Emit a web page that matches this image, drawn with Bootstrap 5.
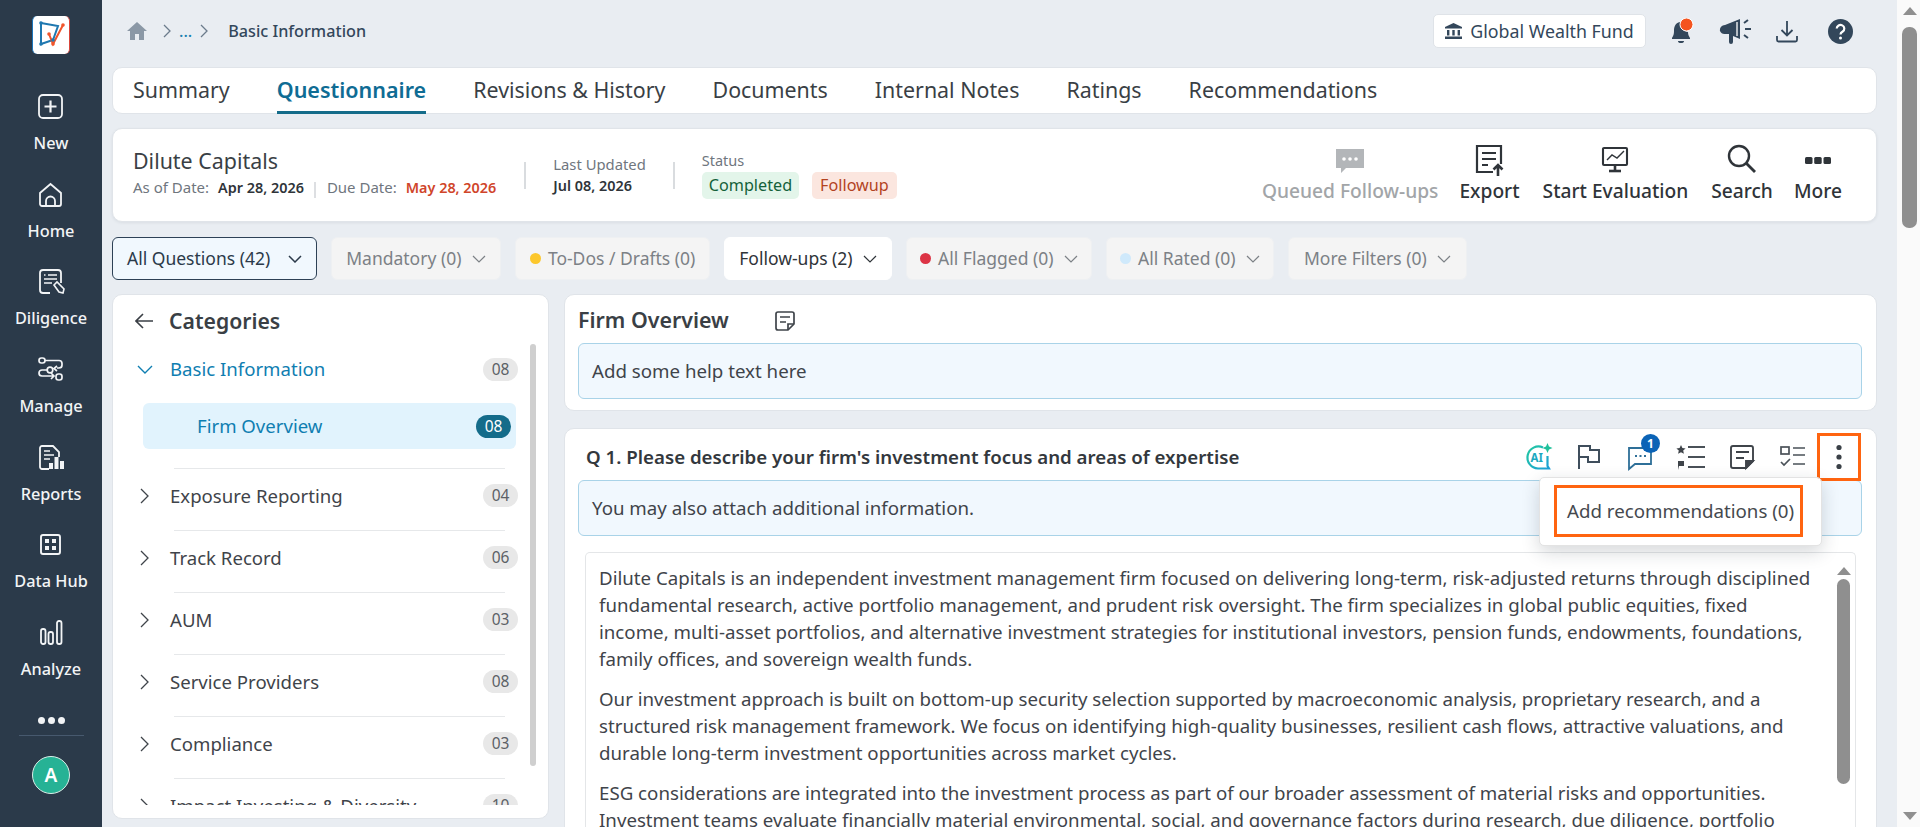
<!DOCTYPE html>
<html lang="en">
<head>
  <meta charset="UTF-8" />
  <meta name="viewport" content="width=device-width, initial-scale=1.0"/>
  <title>Questionnaire - Basic Information</title>
  <link href="https://cdn.jsdelivr.net/npm/bootstrap@5.3.2/dist/css/bootstrap.min.css" rel="stylesheet">
  <style>
    html, body { height: 827px; overflow: hidden; }
    body { font-family: "Noto Sans", "Open Sans", sans-serif; background: #e9edf2; color: #3a3f45; }

    /* left rail */
    .rail { width: 102px; height: 827px; background: #2b3a4a; color: #f2f4f6; padding-top: 16px; flex: none; }
    .rail-logo { width: 38px; height: 38px; background: #fff; border-radius: 5px; margin-bottom: 34px; border-right: 1px solid #d9453a; border-left: 1px solid #1b75bb; flex: none; }
    .rail-item { height: 87.7px; font-size: 16.3px; font-weight: 500; line-height: 22px; flex: none; }
    .rail-item svg { height: 38px; width: 30px; margin-bottom: 6px; }
    .rail-dots { font-size: 0; gap: 3px; margin-top: 15px; }
    .rail-dots i { width: 7px; height: 7px; border-radius: 50%; background: #f2f4f6; }
    .rail-line { width: 65px; border-top: 1px solid #47596e; margin: 11px 0 20px; }
    .rail-avatar { width: 38px; height: 38px; border-radius: 50%; background: #26b295; border: 1px solid #d9efe9; font-size: 19px; font-weight: 600; color: #fff; }

    /* page */
    .page-main { width: 1795px; padding: 0 20px 0 10px; flex: none; }
    .page-scroll { width: 23px; height: 827px; background: #fafafa; flex: none; padding: 7px 3px 7px 5px; }
    .scroll-up { width: 0; height: 0; border: 7px solid transparent; border-top: 0; border-bottom: 8px solid #8f8f8f; margin: 0 auto 3px; }
    .scroll-down { width: 0; height: 0; border: 7px solid transparent; border-bottom: 0; border-top: 8px solid #8f8f8f; margin: auto auto 0; }
    .page-thumb { height: 201px; background: #8f8f8f; border-radius: 7px; margin-top: 9px; }
    .top-bar { height: 67px; padding: 0 24px 5px 15px; }
    .crumb { font-size: 16.2px; font-weight: 500; color: #33475b; }
    .crumb-more { color: #1a7fb0; }
    .fund-chip { width: 213px; height: 34px; background: #fff; border: 1px solid #dfe3e8; border-radius: 5px; font-size: 17.8px; color: #33475b; margin-right: 23px; }
    .tool-mid { margin-left: 22px; }
    .tool-end { margin-left: 29px; }

    .panel { background: #fff; border: 1px solid #e0e4e9; border-radius: 10px; }
    .tabs-bar { height: 47px; padding: 0 20px; gap: 47px; margin-bottom: 14px; }
    .tabs-bar .nav-link { padding: 0; height: 46px; line-height: 43px; font-size: 21.4px; color: #3a3f45; border-bottom: 3px solid transparent; }
    .tabs-bar .nav-link.active { color: #0f6c94; font-weight: 600; font-size: 21.5px; border-bottom-color: #146c8a; }

    .head-card { height: 94px; padding: 0 34px 0 20px; margin-bottom: 15px; box-shadow: 0 1px 3px rgba(40,50,60,.08); }
    .firm-block { padding-bottom: 6px; margin-right: 1px; }
    .firm-name { font-size: 21.4px; line-height: 28px; color: #3a3f45; margin-bottom: 2px; }
    .head-small { font-size: 15px; line-height: 21px; color: #6f767e; white-space: nowrap; }
    .head-strong { font-size: 14.4px; font-weight: 600; color: #2f3439; margin-left: 9px; }
    .head-due { font-size: 14.4px; font-weight: 600; color: #d0452a; margin-left: 9px; }
    .date-split { width: 2px; height: 16px; background: #dddfe2; margin: 5px 11px 0 10px; }
    .head-sep { width: 2px; height: 27px; background: #d9dcdf; margin: 0 27px; }
    .updated-label { font-size: 14.8px; }
    .status-label { font-size: 14.5px; line-height: 16px; }
    .state-row { gap: 13px; }
    .state-chip { height: 27px; line-height: 27px; border-radius: 5px; padding: 0 7px; font-size: 16.2px; }
    .state-done { background: #e3f5ea; color: #14613a; }
    .state-follow { background: #fbe6df; color: #b3431f; padding: 0 8px; }
    .head-act { font-size: 19.2px; font-weight: 500; color: #2f3439; line-height: 24px; padding-bottom: 4px; white-space: nowrap; }
    .head-act svg { height: 34px; width: 36px; margin-bottom: 1px; }
    .head-act.off { color: #a2a5a8; }
    .act-gap { margin-left: 21px; }
    .act-wide { margin-left: 23px; }

    .filter-row { height: 43px; gap: 14px; margin-bottom: 14px; }
    .filter-btn { height: 43px; padding: 0 14px; font-size: 17.5px; line-height: 1; border-radius: 6px; border: 1px solid #eef0f2; background: #f4f4f4; color: #7c8186; gap: 7px; display: inline-flex; align-items: center; white-space: nowrap; }
    .filter-btn svg { margin-left: 3.5px; }
    .filter-btn.on { background: #f1f8fe; border-color: #2d4156; color: #2b3a4a; }
    .filter-btn.on svg { margin-left: 11px; }
    .filter-btn.plain { background: #fff; border-color: #fff; color: #2f3439; }
    .filter-btn.dotted { padding: 0 13px; }
    .filter-btn.wide { padding: 0 15px; }
    .dot-mark { width: 11px; height: 11px; border-radius: 50%; }

    .body-row { gap: 15px; height: 540px; }
    .cat-panel { width: 437px; height: 525px; padding: 0 12px 13px 0; flex: none; }
    .cat-title { font-size: 21.2px; font-weight: 600; line-height: 28px; padding: 3px 0 0 22px; gap: 16px; height: 49px; color: #3a3f45; }
    .cat-wrap { height: 461px; overflow: hidden; }
    .cat-scroll { width: 6px; height: 422px; background: #cfcfcf; border-radius: 3px; flex: none; }
    .cat-list { width: 406px; flex: none; display: block; }
    .cat-row { height: 61px; font-size: 18.6px; padding: 0 1px 8px 24px; gap: 17px; background: transparent; border: 0; color: #3f444a; }
    .cat-row svg { flex: none; }
    .cat-row .cat-count { margin-left: auto; }
    .cat-rule { height: 1px; background: #e6e8ea; margin-left: 61px; width: 331px; }
    .cat-open { height: 50px; color: #0f7eb1; padding-bottom: 0; }
    .cat-sub { height: 46px; width: 373px; margin: 9px 0 19px 30px; padding: 0 5px 0 54px; background: #e1f3fd; border-radius: 6px; color: #0f7eb1; font-size: 18.6px; }
    .cat-count { width: 35px; height: 23px; border-radius: 12px; background: #e8e8e8; color: #5c6166; font-size: 15.5px; font-weight: 400; padding: 0; line-height: 23px; flex: none; }
    .cat-sub .cat-count { background: #146c8a; color: #fff; }

    .right-col { width: 1313px; gap: 17px; flex: none; }
    .help-box { height: 56px; background: #f1f8fe; border: 1px solid #a9d3e8; border-radius: 6px; font-size: 18.7px; padding: 0 13px; color: #3f444a; flex: none; }
    .over-card { height: 117px; padding: 0 14px 0 13px; flex: none; }
    .over-title { height: 48px; font-size: 21.4px; font-weight: 600; padding-top: 3px; gap: 45px; color: #3a3f45; }
    .q-card { height: 420px; padding: 0 14px 0 13px; flex: none; }
    .q-head { height: 51px; padding: 5px 1px 0 8px; font-size: 18.7px; font-weight: 600; color: #33383d; }
    .q-tools { gap: 21px; }
    .q-tools svg { width: 30px; height: 30px; display: block; flex: none; }
    .q-kebab { width: 44px; height: 48px; border: 3px solid #ff6410; margin: 0 0 0 9px; flex: none; }
    .q-badge { top: -8px; right: -5px; width: 19px; height: 19px; background: #0b63b6; font-size: 12px; line-height: 19px; padding: 0; border-radius: 50%; }
    .q-menu { top: 44px; right: 39px; left: auto; width: 283px; height: 69px; padding: 7px 20px 0 14px; border-radius: 5px; box-shadow: 0 6px 18px rgba(30,40,50,.18); border-color: #e3e3e3; margin: 0; }
    .q-menu-hit { height: 52px; width: 249px; border: 3px solid #ff6410; font-size: 18.7px; font-weight: 400; color: #45494e; padding-left: 10px; white-space: nowrap; }
    .answer-box { margin: 16px 6px 0 7px; border: 1px solid #e4e6e8; border-bottom: 0; border-radius: 5px 5px 0 0; padding: 11px 0 0 13px; height: 300px; overflow: hidden; }
    .answer-text { width: 1215px; font-size: 18.7px; line-height: 27px; color: #3f444a; }
    .answer-text p { margin-bottom: 13px; }
    .answer-bar { width: 20px; padding: 3px 5px 0 2px; flex: none; }
    .answer-thumb { height: 205px; background: #8f8f8f; border-radius: 7px; margin-top: 4px; }
  </style>
</head>
<body class="d-flex">

  <!-- Left rail -->
  <nav class="rail d-flex flex-column align-items-center text-center">
    <div class="rail-logo d-flex align-items-center justify-content-center">
      <svg width="30" height="30" viewBox="0 0 30 30" fill="none" stroke-width="2">
        <path d="M5 3 L22 6 L17 20 L5 24 Z" stroke="#1f78b0"/>
        <path d="M13 14 L17 24 L27 5" stroke="#f0552b"/>
        <circle cx="5" cy="3" r="1.8" fill="#1f78b0" stroke="none"/><circle cx="5" cy="24" r="1.8" fill="#1f78b0" stroke="none"/><circle cx="17" cy="20" r="1.8" fill="#1f78b0" stroke="none"/>
        <circle cx="13" cy="14" r="1.8" fill="#f0552b" stroke="none"/><circle cx="27" cy="5" r="1.8" fill="#f0552b" stroke="none"/><circle cx="17" cy="24" r="1.8" fill="#f0552b" stroke="none"/>
      </svg>
    </div>
    <div class="rail-item">
      <svg viewBox="0 0 30 38" fill="none" stroke="#f2f4f6" stroke-width="1.8"><rect x="3" y="7" width="23" height="23" rx="4"/><path d="M14.5 12.5v12M8.5 18.5h12" stroke-width="2.2"/></svg>
      <div>New</div>
    </div>
    <div class="rail-item">
      <svg viewBox="0 0 30 38" fill="none" stroke="#f2f4f6" stroke-width="1.8"><path d="M4 17 L14.5 8 L25 17 V28 a2 2 0 0 1-2 2 H6 a2 2 0 0 1-2-2 Z"/><path d="M10 30 V25 a4.5 4.5 0 0 1 9 0 V30"/></svg>
      <div>Home</div>
    </div>
    <div class="rail-item">
      <svg viewBox="0 0 30 38" fill="none" stroke="#f2f4f6" stroke-width="1.8"><path d="M14 30 H7 a3 3 0 0 1-3-3 V10 a3 3 0 0 1 3-3 H22 a3 3 0 0 1 3 3 V20"/><path d="M8 12h1.5M12 12h9M8 16h13M8 20h8" stroke-width="1.6"/><path d="M18 22 L21 19 L28 26 L27 30 L23 29 Z" stroke-width="1.6"/></svg>
      <div>Diligence</div>
    </div>
    <div class="rail-item">
      <svg viewBox="0 0 30 38" fill="none" stroke="#f2f4f6" stroke-width="1.7"><rect x="3" y="7" width="6" height="5" rx="2.4"/><path d="M9 9.5 H23 a3 3 0 0 1 3 3 V14 a3 3 0 0 1-3 3 H21"/><circle cx="14" cy="19" r="2.8"/><path d="M11 19 H6 a3 3 0 0 0-3 3 a3 3 0 0 0 3 3 H18 M15 22 l3 3 l-3 3"/><rect x="20" y="23" width="6" height="6" rx="2.4"/><path d="M21 15 l-3 2.5 l3 2.5"/></svg>
      <div>Manage</div>
    </div>
    <div class="rail-item">
      <svg viewBox="0 0 30 38" fill="none" stroke="#f2f4f6" stroke-width="1.8"><path d="M13 30 H6 a2 2 0 0 1-2-2 V9 a2 2 0 0 1 2-2 H17 L23 13 V18"/><path d="M8 12h6M8 16h10M8 20h6" stroke-width="1.6"/><rect x="13" y="24" width="4" height="6" fill="#f2f4f6" stroke="none"/><rect x="18.5" y="18" width="4" height="12" fill="#f2f4f6" stroke="none"/><rect x="24" y="22" width="4" height="8" fill="#f2f4f6" stroke="none"/></svg>
      <div>Reports</div>
    </div>
    <div class="rail-item">
      <svg viewBox="0 0 30 38" fill="none" stroke="#f2f4f6" stroke-width="1.9"><rect x="5" y="9" width="19" height="19" rx="2"/><g fill="#f2f4f6" stroke="none"><rect x="9" y="13" width="4" height="4"/><rect x="16" y="13" width="4" height="4"/><rect x="9" y="20" width="4" height="4"/><rect x="16" y="20" width="4" height="4"/></g></svg>
      <div>Data Hub</div>
    </div>
    <div class="rail-item">
      <svg viewBox="0 0 30 38" fill="none" stroke="#f2f4f6" stroke-width="1.8"><rect x="5" y="15" width="4.5" height="15" rx="2"/><rect x="12.5" y="18" width="4.5" height="12" rx="2"/><rect x="21" y="7" width="4.5" height="23" rx="2"/></svg>
      <div>Analyze</div>
    </div>
    <div class="rail-dots d-flex"><i></i><i></i><i></i></div>
    <div class="rail-line"></div>
    <div class="rail-avatar d-flex align-items-center justify-content-center">A</div>
  </nav>

  <div class="page-main">
    <!-- Breadcrumb and top tools -->
    <header class="top-bar d-flex align-items-center">
      <svg width="20" height="18" viewBox="0 0 20 18" fill="#8b98a6"><path d="M10 0 L20 9 H17 V18 H12 V12 H8 V18 H3 V9 H0 Z"/></svg>
      <svg class="ms-3" width="8" height="14" viewBox="0 0 8 14" fill="none" stroke="#6b7b8c" stroke-width="1.3"><path d="M1 1 L7 7 L1 13"/></svg>
      <span class="crumb crumb-more ms-2">...</span>
      <svg class="ms-2 me-3" width="8" height="14" viewBox="0 0 8 14" fill="none" stroke="#6b7b8c" stroke-width="1.3"><path d="M1 1 L7 7 L1 13"/></svg>
      <span class="crumb ms-1">Basic Information</span>
      <div class="fund-chip d-flex align-items-center justify-content-center gap-2 ms-auto">
        <svg width="17" height="16" viewBox="0 0 17 16" fill="#33475b"><path d="M8.5 0 L17 4 V5.5 H0 V4 Z"/><rect x="2" y="7" width="2.4" height="5.5"/><rect x="7.3" y="7" width="2.4" height="5.5"/><rect x="12.6" y="7" width="2.4" height="5.5"/><rect x="0" y="13.5" width="17" height="2.5"/></svg>
        Global Wealth Fund
      </div>
      <svg width="26" height="26" viewBox="0 0 26 26"><path d="M11 4 c-5 1-6 5-6 9 c0 4-1 5-2 7 v1 H21 v-1 c-1-2-2-3-2-6 c-3 0-5-3-5-6 c0-2 0-3-3-4 Z" fill="#33475b"/><path d="M9 23 a3 2 0 0 0 6 0 Z" fill="#33475b"/><circle cx="17.5" cy="6.5" r="6.5" fill="#f4541f" stroke="#fff" stroke-width="1"/></svg>
      <svg class="ms-4" width="34" height="26" viewBox="0 0 34 26"><path d="M1 13 a5 5 0 0 1 5-6 L21 1 V21 L14 18 V24 a2 2 0 0 1-4 0 V16 H6 a5 5 0 0 1-5-3 Z" fill="#33475b"/><path d="M18 4 L18 18" stroke="#fff" stroke-width="1.3"/><path d="M25 5 l4-3 M26 11h6 M25 17 l4 3" stroke="#33475b" stroke-width="2"/></svg>
      <svg class="tool-mid" width="24" height="24" viewBox="0 0 24 24" fill="none" stroke="#33475b" stroke-width="1.8"><path d="M12 2 V16 M6.5 11 L12 16.5 L17.5 11"/><path d="M2 17 V21 a1.5 1.5 0 0 0 1.5 1.5 H20.5 a1.5 1.5 0 0 0 1.5-1.5 V17"/></svg>
      <svg class="tool-end" width="25" height="25" viewBox="0 0 25 25"><circle cx="12.5" cy="12.5" r="12.5" fill="#33475b"/><path d="M8.7 9.5 a3.8 3.6 0 1 1 6 3 c-1.5 1-2.2 1.6-2.2 3" fill="none" stroke="#fff" stroke-width="2.2"/><circle cx="12.5" cy="19" r="1.5" fill="#fff"/></svg>
    </header>

    <!-- Tabs -->
    <ul class="nav panel tabs-bar flex-nowrap">
      <li class="nav-item"><a class="nav-link" href="#">Summary</a></li>
      <li class="nav-item"><a class="nav-link active" href="#">Questionnaire</a></li>
      <li class="nav-item"><a class="nav-link" href="#">Revisions &amp; History</a></li>
      <li class="nav-item"><a class="nav-link" href="#">Documents</a></li>
      <li class="nav-item"><a class="nav-link" href="#">Internal Notes</a></li>
      <li class="nav-item"><a class="nav-link" href="#">Ratings</a></li>
      <li class="nav-item"><a class="nav-link" href="#">Recommendations</a></li>
    </ul>

    <!-- Firm header -->
    <section class="panel head-card d-flex align-items-center">
      <div class="firm-block">
        <div class="firm-name">Dilute Capitals</div>
        <div class="head-small d-flex">As of Date: <span class="head-strong">Apr 28, 2026</span><span class="date-split"></span>Due Date: <span class="head-due">May 28, 2026</span></div>
      </div>
      <div class="head-sep"></div>
      <div class="head-small">
        <div class="updated-label">Last Updated</div>
        <div class="head-strong ms-0">Jul 08, 2026</div>
      </div>
      <div class="head-sep"></div>
      <div>
        <div class="head-small status-label mb-1">Status</div>
        <div class="state-row d-flex">
          <span class="state-chip state-done">Completed</span>
          <span class="state-chip state-follow">Followup</span>
        </div>
      </div>
      <div class="head-act off text-center ms-auto">
        <svg viewBox="0 0 36 34"><path d="M4 5 H32 V24 H14 L9 29 V24 H4 Z" fill="#b3b6b9"/><g fill="#fff"><circle cx="12" cy="15" r="1.8"/><circle cx="18" cy="15" r="1.8"/><circle cx="24" cy="15" r="1.8"/></g></svg>
        <div>Queued Follow-ups</div>
      </div>
      <div class="head-act act-gap text-center">
        <svg viewBox="0 0 36 34" fill="none" stroke="#2f3439" stroke-width="2.2"><path d="M22 28 H6 V2 H30 V20"/><path d="M11 9h14M11 15h14M11 21h6"/><path d="M27 32 V21 M22.5 25.5 L27 21 L31.5 25.5" stroke-width="2.6"/></svg>
        <div>Export</div>
      </div>
      <div class="head-act act-wide text-center">
        <svg viewBox="0 0 36 34" fill="none" stroke="#2f3439" stroke-width="2.1"><rect x="6" y="4" width="24" height="17" rx="1"/><path d="M10 16 L15 11 L20 14 L27 7" stroke-width="1.4"/><path d="M18 22 V26" stroke-width="2.6"/><path d="M12 27 H24" stroke-width="2.6"/></svg>
        <div>Start Evaluation</div>
      </div>
      <div class="head-act act-wide text-center">
        <svg viewBox="0 0 36 34" fill="none" stroke="#2f3439" stroke-width="2.4"><circle cx="15" cy="12" r="10"/><path d="M22 19 L31 28" stroke-width="2.8"/></svg>
        <div>Search</div>
      </div>
      <div class="head-act act-gap text-center">
        <svg viewBox="0 0 36 34" fill="#2f3439"><rect x="5" y="13" width="7.5" height="7" rx="1.5"/><rect x="14.2" y="13" width="7.5" height="7" rx="1.5"/><rect x="23.5" y="13" width="7.5" height="7" rx="1.5"/></svg>
        <div>More</div>
      </div>
    </section>

    <!-- Filters -->
    <div class="filter-row d-flex">
      <button class="btn filter-btn on">All Questions (42)<svg width="14" height="8" viewBox="0 0 14 8" fill="none" stroke="#2b3a4a" stroke-width="1.5"><path d="M1 1 L7 7 L13 1"/></svg></button>
      <button class="btn filter-btn">Mandatory (0)<svg width="14" height="8" viewBox="0 0 14 8" fill="none" stroke="#7c8186" stroke-width="1.2"><path d="M1 1 L7 7 L13 1"/></svg></button>
      <button class="btn filter-btn"><span class="dot-mark" style="background:#fcc72c"></span>To-Dos / Drafts (0)</button>
      <button class="btn filter-btn plain">Follow-ups (2)<svg width="14" height="8" viewBox="0 0 14 8" fill="none" stroke="#2f3439" stroke-width="1.2"><path d="M1 1 L7 7 L13 1"/></svg></button>
      <button class="btn filter-btn dotted"><span class="dot-mark" style="background:#dc3445"></span>All Flagged (0)<svg width="14" height="8" viewBox="0 0 14 8" fill="none" stroke="#7c8186" stroke-width="1.2"><path d="M1 1 L7 7 L13 1"/></svg></button>
      <button class="btn filter-btn dotted"><span class="dot-mark" style="background:#cfe9fb"></span>All Rated (0)<svg width="14" height="8" viewBox="0 0 14 8" fill="none" stroke="#7c8186" stroke-width="1.2"><path d="M1 1 L7 7 L13 1"/></svg></button>
      <button class="btn filter-btn wide">More Filters (0)<svg width="14" height="8" viewBox="0 0 14 8" fill="none" stroke="#7c8186" stroke-width="1.2"><path d="M1 1 L7 7 L13 1"/></svg></button>
    </div>

    <div class="body-row d-flex">
      <!-- Categories -->
      <aside class="panel cat-panel">
        <div class="cat-title d-flex align-items-center">
          <svg width="18" height="16" viewBox="0 0 18 16" fill="none" stroke="#3a3f45" stroke-width="1.6"><path d="M18 8 H1 M8 1 L1 8 L8 15"/></svg>
          Categories
        </div>
        <div class="cat-wrap d-flex justify-content-between">
          <div class="cat-list list-group list-group-flush">
            <div class="list-group-item cat-row cat-open d-flex align-items-center">
              <svg width="16" height="9" viewBox="0 0 16 9" fill="none" stroke="#0f7eb1" stroke-width="1.4"><path d="M1 1 L8 8 L15 1"/></svg>
              Basic Information<span class="badge cat-count">08</span>
            </div>
            <div class="cat-sub d-flex align-items-center justify-content-between">Firm Overview<span class="badge cat-count">08</span></div>
            <div class="cat-rule"></div>
            <div class="list-group-item cat-row d-flex align-items-center"><svg width="16" height="16" viewBox="0 0 16 16" fill="none" stroke="#3f444a" stroke-width="1.3"><path d="M4 1 L11 8 L4 15"/></svg>Exposure Reporting<span class="badge cat-count">04</span></div>
            <div class="cat-rule"></div>
            <div class="list-group-item cat-row d-flex align-items-center"><svg width="16" height="16" viewBox="0 0 16 16" fill="none" stroke="#3f444a" stroke-width="1.3"><path d="M4 1 L11 8 L4 15"/></svg>Track Record<span class="badge cat-count">06</span></div>
            <div class="cat-rule"></div>
            <div class="list-group-item cat-row d-flex align-items-center"><svg width="16" height="16" viewBox="0 0 16 16" fill="none" stroke="#3f444a" stroke-width="1.3"><path d="M4 1 L11 8 L4 15"/></svg>AUM<span class="badge cat-count">03</span></div>
            <div class="cat-rule"></div>
            <div class="list-group-item cat-row d-flex align-items-center"><svg width="16" height="16" viewBox="0 0 16 16" fill="none" stroke="#3f444a" stroke-width="1.3"><path d="M4 1 L11 8 L4 15"/></svg>Service Providers<span class="badge cat-count">08</span></div>
            <div class="cat-rule"></div>
            <div class="list-group-item cat-row d-flex align-items-center"><svg width="16" height="16" viewBox="0 0 16 16" fill="none" stroke="#3f444a" stroke-width="1.3"><path d="M4 1 L11 8 L4 15"/></svg>Compliance<span class="badge cat-count">03</span></div>
            <div class="cat-rule"></div>
            <div class="list-group-item cat-row d-flex align-items-center"><svg width="16" height="16" viewBox="0 0 16 16" fill="none" stroke="#3f444a" stroke-width="1.3"><path d="M4 1 L11 8 L4 15"/></svg>Impact Investing &amp; Diversity<span class="badge cat-count">10</span></div>
          </div>
          <div class="cat-scroll"></div>
        </div>
      </aside>

      <div class="right-col d-flex flex-column">
        <!-- Section help -->
        <section class="panel over-card">
          <div class="over-title d-flex align-items-center">
            Firm Overview
            <svg width="22" height="22" viewBox="0 0 22 22" fill="none" stroke="#3f444a" stroke-width="1.7"><path d="M14 20 H4 a2 2 0 0 1-2-2 V4 a2 2 0 0 1 2-2 H18 a2 2 0 0 1 2 2 V14 Z"/><path d="M6 7h10M6 12h6"/><path d="M14 20 V14 H20"/></svg>
          </div>
          <div class="help-box d-flex align-items-center">Add some help text here</div>
        </section>

        <!-- Question -->
        <section class="panel q-card">
          <div class="q-head d-flex align-items-center">
            Q 1. Please describe your firm's investment focus and areas of expertise
            <div class="q-tools d-flex align-items-center ms-auto">
              <svg viewBox="0 0 30 30" fill="none" stroke="url(#aiGrad)" stroke-width="2.2"><defs><linearGradient id="aiGrad" x1="0" y1="0" x2="1" y2="1"><stop offset="0" stop-color="#22c8a0"/><stop offset="1" stop-color="#1c9fd8"/></linearGradient></defs><path d="M20 5.5 A11 11 0 1 0 15 26.5 H26 L24.5 24 V14"/><text x="7.5" y="20" font-size="11.5" font-weight="700" fill="#1aa8bf" stroke="none" font-family="Noto Sans">AI</text><path d="M24.5 1 l1.5 3.5 L29.5 6 l-3.5 1.5 L24.5 11 l-1.5-3.5 L19.5 6 l3.5-1.5 Z" fill="#1fc19b" stroke="none"/></svg>
              <svg viewBox="0 0 30 30" fill="none" stroke="#3f4e5c" stroke-width="2"><path d="M5 27 V4 H16 V8 H25 V20 H14 V15 H5"/></svg>
              <span class="position-relative d-flex">
                <svg viewBox="0 0 30 30" fill="none" stroke="#2e6f98" stroke-width="1.8"><path d="M4 6 H26 V22 H10 L4 27 Z"/><path d="M10 14h2M14.5 14h2M19 14h2" stroke-width="2"/></svg>
                <span class="badge q-badge position-absolute">1</span>
              </span>
              <svg viewBox="0 0 30 30" fill="none" stroke="#4a5158" stroke-width="1.8"><path d="M12 5h17M12 15h17M12 25h17"/><path d="M5 3 l1.4 3 l3.2 .4 l-2.4 2.2 l.7 3.2 L5 10.2 L2.1 11.8 l.7-3.2 L.4 6.4 l3.2-.4 Z" fill="#3f444a" stroke="none"/><path d="M2 28 V19 H8 V24 H3" fill="#3f444a" stroke="none"/></svg>
              <svg viewBox="0 0 30 30" fill="none" stroke="#3f444a" stroke-width="1.9"><path d="M19 26 H6 a2 2 0 0 1-2-2 V6 a2 2 0 0 1 2-2 H24 a2 2 0 0 1 2 2 V19 Z"/><path d="M9 10h13M9 16h8"/><path d="M19 26 V19 H26 Z" fill="#3f444a"/></svg>
              <svg viewBox="0 0 30 30" fill="none" stroke="#4a5158" stroke-width="1.7"><rect x="3" y="5" width="8" height="7"/><path d="M3 20 l3 3 l6-6M15 6h12M15 13h12M15 22h12"/></svg>
            </div>
            <div class="position-relative">
              <div class="q-kebab d-flex align-items-center justify-content-center">
                <svg width="6" height="26" viewBox="0 0 6 26" fill="#3a4047"><circle cx="3" cy="3.5" r="2.6"/><circle cx="3" cy="13" r="2.6"/><circle cx="3" cy="22.5" r="2.6"/></svg>
              </div>
              <div class="dropdown-menu show q-menu position-absolute">
                <div class="q-menu-hit d-flex align-items-center">Add recommendations (0)</div>
              </div>
            </div>
          </div>
          <div class="help-box d-flex align-items-center">You may also attach additional information.</div>
          <div class="answer-box d-flex justify-content-between">
            <div class="answer-text">
              <p>Dilute Capitals is an independent investment management firm focused on delivering long-term, risk-adjusted returns through disciplined fundamental research, active portfolio management, and prudent risk oversight. The firm specializes in global public equities, fixed income, multi-asset portfolios, and alternative investment strategies for institutional investors, pension funds, endowments, foundations, family offices, and sovereign wealth funds.</p>
              <p>Our investment approach is built on bottom-up security selection supported by macroeconomic analysis, proprietary research, and a structured risk management framework. We focus on identifying high-quality businesses, resilient cash flows, attractive valuations, and durable long-term investment opportunities across market cycles.</p>
              <p>ESG considerations are integrated into the investment process as part of our broader assessment of material risks and opportunities. Investment teams evaluate financially material environmental, social, and governance factors during research, due diligence, portfolio</p>
            </div>
            <div class="answer-bar">
              <div class="scroll-up"></div>
              <div class="answer-thumb"></div>
            </div>
          </div>
        </section>
      </div>
    </div>
  </div>

  <!-- Page scrollbar -->
  <div class="page-scroll d-flex flex-column">
    <div class="scroll-up"></div>
    <div class="page-thumb"></div>
    <div class="scroll-down"></div>
  </div>

  <script src="https://cdn.jsdelivr.net/npm/bootstrap@5.3.2/dist/js/bootstrap.bundle.min.js"></script>
</body>
</html>
